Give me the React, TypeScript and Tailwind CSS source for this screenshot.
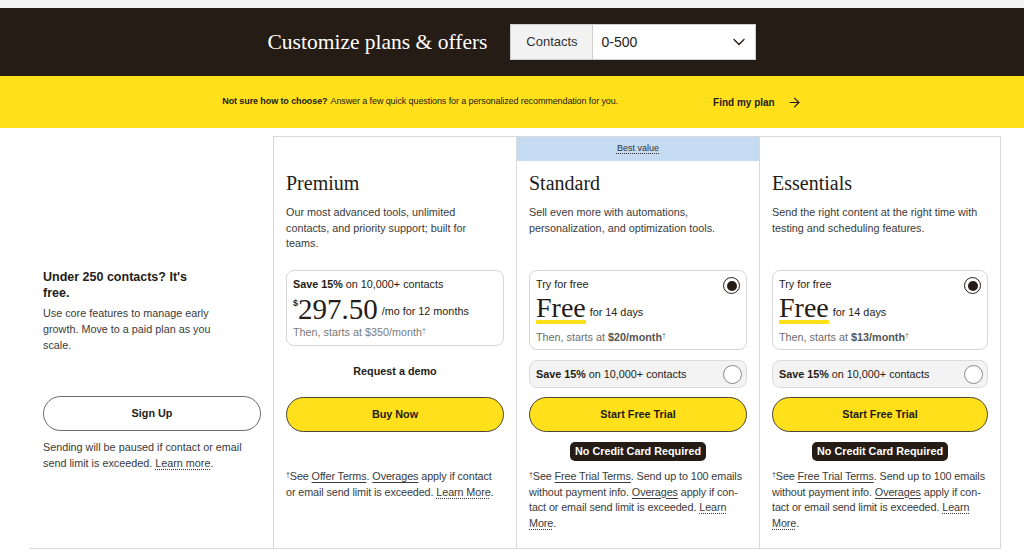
import React from "react";
import { ChevronDown, ArrowRight } from "lucide-react";

const sans = "font-['Liberation_Sans',Arial,sans-serif]";
const serif = "font-['Liberation_Serif','Times_New_Roman',serif]";

function Radio({ checked }: { checked: boolean }) {
  if (checked) {
    return (
      <span className="flex h-[17px] w-[17px] items-center justify-center rounded-full border-[1.5px] border-[#241c15] bg-white">
        <span className="h-[10px] w-[10px] rounded-full bg-[#241c15]" />
      </span>
    );
  }
  return <span className="h-[19px] w-[19px] rounded-full border border-[#8a8a8a] bg-white" />;
}

function FreeBox({ price }: { price: string }) {
  return (
    <>
      <div className="h-[80px] rounded-[8px] border border-[#d6d6d6] px-[6px] pt-[6px]">
        <div className="flex h-[15px] items-center justify-between leading-[15px]">
          <span>Try for free</span>
          <span className="mt-[2px]">
            <Radio checked />
          </span>
        </div>
        <div className="mt-[4px] flex items-start">
          <span className={`${serif} inline-block border-b-[4px] border-[#ffe01b] text-[28px] leading-[24px] text-[#241c15]`}>Free</span>
          <span className="ml-[4px] mt-[9px] leading-[15px]">for 14 days</span>
        </div>
        <div className="mt-[6px] leading-[15px] text-[#6d6d6d]">
          Then, starts at <b className="text-[#555]">{price}/month</b>
          <sup className="text-[7px]">†</sup>
        </div>
      </div>
      <div className="mt-[10px] flex h-[28px] items-center justify-between rounded-[8px] border border-[#dcdcdc] bg-[#f3f3f3] pl-[6px] pr-[4px]">
        <span>
          <b>Save 15%</b> on 10,000+ contacts
        </span>
        <Radio checked={false} />
      </div>
    </>
  );
}

function Card({
  name,
  desc,
  best,
  last,
  children,
  button,
  badge,
  footnote,
}: {
  name: string;
  desc: string;
  best?: boolean;
  last?: boolean;
  children: React.ReactNode;
  button: string;
  badge?: boolean;
  footnote: React.ReactNode;
}) {
  return (
    <div
      className={`${last ? "w-[242px] border-r" : "w-[243px]"} flex flex-col border-l border-t border-[#d9d9d9] text-[10.8px] text-[#241c15]`}
    >
      <div className={`flex h-[24px] items-center justify-center ${best ? "bg-[#c5dbf2]" : ""}`}>
        {best && (
          <span className="text-[9px] underline decoration-dotted underline-offset-2 text-[#333]">Best value</span>
        )}
      </div>
      <div className="px-[12px] pt-[10px]">
        <h2 className={`${serif} text-[20px] leading-[24px]`}>{name}</h2>
        <p className="mt-[10px] h-[56px] w-[211px] leading-[15.5px] text-[#3a3a3a]">{desc}</p>
        <div className="mt-[9px] h-[127px]">{children}</div>
        <button className="flex h-[35px] w-full items-center justify-center rounded-full border border-[#4a4438] bg-[#ffe01b] font-bold text-[#241c15]">
          {button}
        </button>
        <div className="mt-[10px] flex h-[19px] justify-center">
          {badge && (
            <span className="flex h-[19px] w-[136px] items-center justify-center rounded-[5px] bg-[#241c15] font-bold text-white">
              No Credit Card Required
            </span>
          )}
        </div>
        <p className="mt-[8px] w-[215px] leading-[15.5px] tracking-[-0.1px] text-[#3a3a3a]">{footnote}</p>
      </div>
    </div>
  );
}

const U = ({ children }: { children: React.ReactNode }) => (
  <span className="underline underline-offset-2">{children}</span>
);
const D = ({ children }: { children: React.ReactNode }) => (
  <span className="underline decoration-dotted underline-offset-2">{children}</span>
);

export default function App() {
  return (
    <div className={`${sans} h-[552px] w-[1024px] overflow-hidden bg-white`}>
      <div className="h-[8px] bg-[#f3f3f3]" />
      <div className="flex h-[68px] items-center justify-center bg-[#241c15]">
        <h1 className={`${serif} text-[21.5px] text-white`}>Customize plans &amp; offers</h1>
        <div className="ml-[23px] flex h-[36px] w-[246px] border border-[#cfcfcf] bg-white">
          <div className="flex w-[82px] items-center justify-center border-r border-[#cfcfcf] bg-[#f2f2f2] text-[13px] text-[#333]">
            Contacts
          </div>
          <div className="flex flex-1 items-center justify-between pl-[8px] pr-[6px] text-[14px] text-[#241c15]">
            <span>0-500</span>
            <ChevronDown size={20} strokeWidth={1.6} />
          </div>
        </div>
      </div>
      <div className="flex h-[52px] items-center justify-center bg-[#ffe01b] text-[9px] tracking-[-0.1px] text-[#241c15]">
        <span className="font-bold">Not sure how to choose?</span>
        <span className="ml-[3px]">Answer a few quick questions for a personalized recommendation for you.</span>
        <span className="ml-[95px] text-[10px] font-bold tracking-normal">Find my plan</span>
        <ArrowRight className="ml-[12px]" size={15} strokeWidth={1.8} />
      </div>
      <div className="ml-[30px] mt-[8px] flex h-[413px] w-[971px] border-b border-[#d9d9d9]">
        <div className="w-[243px] pl-[13px] pr-[12px] pt-[133px] text-[10.8px] text-[#241c15]">
          <h3 className="w-[160px] text-[12.5px] font-bold leading-[16px]">Under 250 contacts? It's free.</h3>
          <p className="mt-[4px] w-[172px] leading-[16px] text-[#3a3a3a]">
            Use core features to manage early growth. Move to a paid plan as you scale.
          </p>
          <button className="mt-[43px] flex h-[35px] w-full items-center justify-center rounded-full border border-[#6b6b6b] bg-white font-bold">
            Sign Up
          </button>
          <p className="mt-[8px] leading-[16px] text-[#3a3a3a]">
            Sending will be paused if contact or email send limit is exceeded. <D>Learn more</D>.
          </p>
        </div>
        <Card
          name="Premium"
          desc="Our most advanced tools, unlimited contacts, and priority support; built for teams."
          button="Buy Now"
          footnote={
            <>
              <sup className="text-[7px]">†</sup>See <U>Offer Terms</U>. <U>Overages</U> apply if contact or email send
              limit is exceeded. <D>Learn More</D>.
            </>
          }
        >
          <div className="h-[76px] rounded-[8px] border border-[#d6d6d6] px-[6px] pt-[6px]">
            <div className="leading-[15px]">
              <b>Save 15%</b> on 10,000+ contacts
            </div>
            <div className="mt-[2px] flex h-[30px] items-end">
              <sup className="mb-[17px] text-[9px] font-bold">$</sup>
              <span className={`${serif} text-[29px] leading-[30px]`}>297.50</span>
              <span className="mb-[5px] ml-[4px] leading-[15px]">/mo for 12 months</span>
            </div>
            <div className="mt-[1px] leading-[15px] text-[#7a7a7a]">
              Then, starts at $350/month<sup className="text-[7px]">†</sup>
            </div>
          </div>
          <div className="mt-[18px] text-center font-bold leading-[15px]">Request a demo</div>
        </Card>
        <Card
          name="Standard"
          best
          badge
          desc="Sell even more with automations, personalization, and optimization tools."
          button="Start Free Trial"
          footnote={
            <>
              <sup className="text-[7px]">†</sup>See <U>Free Trial Terms</U>. Send up to 100 emails without payment
              info. <U>Overages</U> apply if con&shy;tact or email send limit is exceeded. <D>Learn More</D>.
            </>
          }
        >
          <FreeBox price="$20" />
        </Card>
        <Card
          name="Essentials"
          last
          badge
          desc="Send the right content at the right time with testing and scheduling features."
          button="Start Free Trial"
          footnote={
            <>
              <sup className="text-[7px]">†</sup>See <U>Free Trial Terms</U>. Send up to 100 emails without payment
              info. <U>Overages</U> apply if con&shy;tact or email send limit is exceeded. <D>Learn More</D>.
            </>
          }
        >
          <FreeBox price="$13" />
        </Card>
      </div>
    </div>
  );
}
